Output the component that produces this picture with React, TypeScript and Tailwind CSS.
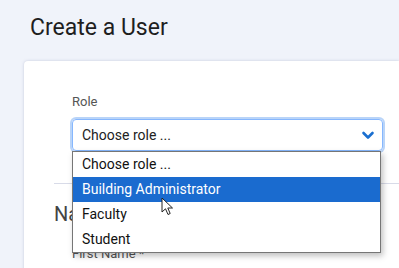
import React from "react";

const OPTIONS = ["Choose role ...", "Building Administrator", "Faculty", "Student"];

function Chevron() {
  return (
    <svg width="14" height="9" viewBox="0 0 14 9" className="text-[#1a6fd0]">
      <path d="M2.5 2 L7 6.5 L11.5 2" fill="none" stroke="currentColor" strokeWidth="2.6" strokeLinecap="round" strokeLinejoin="round" />
    </svg>
  );
}

function Cursor() {
  return (
    <svg width="14" height="20" viewBox="0 0 14 20" className="absolute left-[161px] top-[197px]">
      <path d="M1 1 L1 15 L4.5 11.8 L7 17.5 L9.2 16.5 L6.8 11 L11.5 11 Z" fill="#fff" stroke="#222" strokeWidth="1" strokeLinejoin="round" />
    </svg>
  );
}

export default function App() {
  return (
    <div className="relative h-[268px] w-[399px] overflow-hidden bg-[#f0f3fa] font-['Roboto',sans-serif]">
      <h1 className="pl-[30px] pt-[14px] text-[23px] leading-[28px] text-[#1e1e1e]">Create a User</h1>
      <div className="ml-[24px] mt-[19px] h-[300px] rounded-tl-[4px] bg-white pl-[30px] pt-[33px] shadow-[0_0_3px_rgba(120,130,170,0.35)]">
        <div className="pl-[18px] pr-[16px]">
          <label className="block text-[13px] leading-[16px] text-[#555]">Role</label>
          <div className="mt-[9px] flex h-[32px] items-center justify-between rounded-[4px] border border-[#86b7fe] pl-[9px] pr-[7px] shadow-[0_0_0_2px_rgba(100,160,240,0.45)]">
            <span className="text-[14px] text-[#222]">Choose role ...</span>
            <Chevron />
          </div>
        </div>
        <div className="mt-[32px] border-t border-[#d8dbe8]" />
        <h2 className="mt-[17px] text-[20px] leading-[26px] text-[#444]">Name</h2>
        <div className="pl-[18px] pt-[19px] text-[13px] leading-[16px] text-[#555]">First Name *</div>
      </div>
      <ul className="absolute left-[72px] top-[151px] w-[309px] border border-[#767676] bg-white shadow-[2px_3px_6px_rgba(0,0,0,0.25)]">
        {OPTIONS.map((o, i) => (
          <li
            key={o}
            className={
              i === 1
                ? "h-[25px] bg-[#1a6bcf] pl-[9px] text-[14px] leading-[25px] text-white"
                : "h-[25px] pl-[9px] text-[14px] leading-[25px] text-[#111]"
            }
          >
            {o}
          </li>
        ))}
      </ul>
      <Cursor />
    </div>
  );
}
